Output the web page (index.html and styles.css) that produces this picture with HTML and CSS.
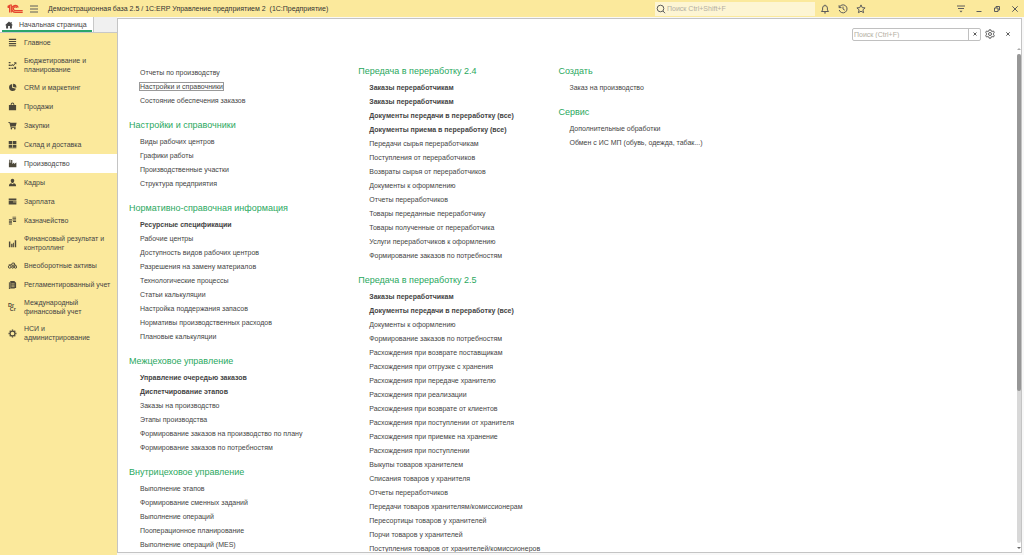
FILE: index.html
```html
<!DOCTYPE html>
<html lang="ru">
<head>
<meta charset="utf-8">
<title>1С:ERP Управление предприятием 2</title>
<link rel="stylesheet" href="styles.css">
</head>
<body>
<div class="app">
  <header class="titlebar">
    <svg class="logo" viewBox="0 0 16 10" fill="none" stroke="#e5462f" stroke-width="1.200"><path d="M.6 3.400 2.600 2V8.500M4.300 8.500V1H3.200L.6 2.600"/><path d="M11.300 3.400A3.400 3.400 0 1 0 8.200 8.300h7.500M9.900 3.700A1.900 1.900 0 1 0 8.200 6.600h7.500"/></svg>
    <button class="icon-btn menu-btn" aria-label="Меню"><svg viewBox="0 0 10 10" width="10" height="10"><path d="M1 2h8M1 5h8M1 8h8"/></svg></button>
    <h1 class="app-title">Демонстрационная база 2.5 / 1С:ERP Управление предприятием 2&nbsp; (1С:Предприятие)</h1>
    <label class="global-search">
      <svg viewBox="0 0 10 10" width="10" height="10"><circle cx="4.5" cy="4.5" r="3.3"/><path d="M7 7l2 2.2"/></svg>
      <input type="text" placeholder="Поиск Ctrl+Shift+F" aria-label="Глобальный поиск">
    </label>
    <div class="quick">
      <button class="icon-btn" aria-label="Уведомления"><svg viewBox="0 0 10 10" width="10" height="10"><path d="M1.4 7.5h7.2L7.4 6V4A2.4 2.4 0 0 0 2.600 4v2zM4 8.900h2M5 1.500V.700"/></svg></button>
      <button class="icon-btn" aria-label="История"><svg viewBox="0 0 10 10" width="10" height="10"><path d="M1.300 3.400A4 4 0 1 1 1.200 6M1.100 1.200v2.400h2.400M5 2.600V5l1.800 1.200"/></svg></button>
      <button class="icon-btn" aria-label="Избранное"><svg viewBox="0 0 10 10" width="10" height="10"><path d="M5 .9l1.200 2.700 2.900.3L6.900 5.800l.7 2.900L5 7.200 2.400 8.700l.7-2.900L.9 3.900l2.900-.3z"/></svg></button>
    </div>
    <div class="window-buttons">
      <button class="icon-btn" aria-label="Сервис"><svg viewBox="0 0 10 10" width="10" height="10"><path d="M1 2h8M2 4.500h6"/><path class="solid" d="M3.500 6.800h3L5 8.600z"/></svg></button>
      <button class="icon-btn" aria-label="Свернуть"><svg viewBox="0 0 10 10" width="10" height="10"><path d="M2.500 7.500h5"/></svg></button>
      <button class="icon-btn" aria-label="Восстановить"><svg viewBox="0 0 10 10" width="10" height="10"><path d="M2.500 4h3.500v3.500H2.500zM4 4V2.500h3.500V6H6"/></svg></button>
      <button class="icon-btn" aria-label="Закрыть"><svg viewBox="0 0 10 10" width="10" height="10"><path d="M2.300 2.300l5.400 5.400M7.700 2.300 2.300 7.700"/></svg></button>
    </div>
  </header>

  <div class="tabs">
    <a class="tab" href="#"><svg viewBox="0 0 10 10" width="8" height="8"><path d="M5 .5 0 5.300h1.400V9.500h2.500V6.300h2.200v3.200h2.500V5.300H10L8.300 3.600V1.200H7v1.200z"/></svg>Начальная страница</a>
  </div>

  <nav class="sidebar">
    <a href="#"><svg viewBox="0 0 10 10"><path d="M1 .8h8v1.300H1zM1 3.200h8v1.300H1zM1 5.600h8v1.300H1zM1 8h8v1.300H1z"/></svg><span>Главное</span></a>
    <a href="#"><svg viewBox="0 0 10 10"><path d="M.8 1h2v1.500h-2zM.8 4h2v1.500h-2zM.8 7.500h2V9h-2zM6.500 1.300h2.800V4l-.9-.9L5.800 5.700l-1-1-1.500 1.200-.5-.8 2.100-1.700.9 1 1.700-1.500zM4 7.600h2V9H4zM7 6.500h2V9H7z"/></svg><span>Бюджетирование и планирование</span></a>
    <a href="#"><svg viewBox="0 0 10 10"><path d="M4.600 1a4 4 0 1 0 4.300 5.400L4.600 5.400z"/><path d="M5.600.8v3.600l3.700.8A4 4 0 0 0 5.600.8z"/></svg><span>CRM и маркетинг</span></a>
    <a href="#"><svg viewBox="0 0 10 10"><path d="M1 3.300h2V2.600a2 2 0 0 1 4 0v.7h2V9.300H1zM4 3.300h2v-.7a1 1 0 0 0-2 0z"/></svg><span>Продажи</span></a>
    <a href="#"><svg viewBox="0 0 10 10"><path d="M.3 1h1.900l.4 1h7L8.500 6H3.600l.2.700h4.700v.7H3L1.500 1.900H.3z"/><circle cx="3.800" cy="8.500" r=".9"/><circle cx="7.600" cy="8.500" r=".9"/></svg><span>Закупки</span></a>
    <a href="#"><svg viewBox="0 0 10 10"><path d="M.8 1h3.900v3.400H.8zM5.400 1h3.900v3.400H5.400zM.8 5.200h3.900v3H.8zM5.400 5.200h3.900v3H5.400zM.8 8.700h8.500v.6H.8z"/></svg><span>Склад и доставка</span></a>
    <a href="#" class="current" aria-current="page"><svg viewBox="0 0 10 10"><path d="M1 9.200V4.200h.4V.8h1.300v3.400h.8V1h1.300v4.600l2-1.700v1.700l2.500-1.700v5.300z"/></svg><span>Производство</span></a>
    <a href="#"><svg viewBox="0 0 10 10"><path d="M5 .7c3 0 2.200 4.600 0 4.900C2.800 5.300 2 .7 5 .7zM1 9.300c0-2.600 1-3.100 2.600-3.500L5 6.900l1.400-1.100C8 6.200 9 6.700 9 9.300z"/></svg><span>Кадры</span></a>
    <a href="#"><svg viewBox="0 0 10 10"><path d="M.8 1.800h8.500v1.500H.8zM.8 4h8.500v4.400H.8z"/><path d="M5.500 5.500h3.800" stroke="#fbe99c" stroke-width=".7"/></svg><span>Зарплата</span></a>
    <a href="#"><svg viewBox="0 0 10 10"><path d="M5 .8h4v1H5zM5 2.400h4v1H5zM5 4h4v1H5zM5.600 5.600H9v1H5.600zM1 3.700h3.400v1H1zM1 5.300h3.400v1H1zM1 6.900h3.400v1H1zM1 8.400h3.400v1H1z"/></svg><span>Казначейство</span></a>
    <a href="#"><svg viewBox="0 0 10 10"><path d="M1 2.800h1.600v6.400H1zM3.500 5.400h1.600v3.800H3.500zM5.700 4.200h1v5h-1zM7.500 1.500h1.600v7.700H7.500z"/></svg><span>Финансовый результат и контроллинг</span></a>
    <a href="#"><svg viewBox="0 0 10 10" stroke="#4c483a" stroke-width="1.100"><circle class="hollow" cx="1.900" cy="6.500" r="1.500"/><circle class="hollow" cx="5.200" cy="6.900" r="1.100"/><circle class="hollow" cx="8.300" cy="6.700" r="1.300"/><path class="hollow" d="M.8 4.300h3l1-2h2.200l.5 2.200 1.800.4M4 4.700h3.500"/></svg><span>Внеоборотные активы</span></a>
    <a href="#"><svg viewBox="0 0 10 10"><path d="M2.500 1H7l2 2v6H2.500z"/><path d="M1 2.500h1V9.500h5.500V10H1z"/><path d="M3.800 4.200h3.500M3.800 5.800h3.500M3.800 7.400h3.500" stroke="#fbe99c" stroke-width=".6"/></svg><span>Регламентированный учет</span></a>
    <a href="#"><svg viewBox="0 0 10 10"><text class="mark" x="0" y="4">Dr</text><text class="mark" x="2" y="9">Cr</text></svg><span>Международный финансовый учет</span></a>
    <a href="#"><svg viewBox="0 0 10 10" stroke="#4c483a"><circle class="hollow" cx="5" cy="5" r="2.700" stroke-width="1.300"/><path stroke-width="1.500" d="M5 .6v1.400M5 8v1.400M.6 5h1.400M8 5h1.400M1.900 1.900l1 1M7.100 7.100l1 1M8.100 1.900l-1 1M1.900 8.100l1-1"/></svg><span>НСИ и администрирование</span></a>
  </nav>

  <main class="panel">
    <div class="toolbar">
      <div class="local-search">
        <input type="text" placeholder="Поиск (Ctrl+F)" aria-label="Поиск">
        <button class="clear" aria-label="Очистить"><svg viewBox="0 0 6 6" width="6" height="6"><path d="M1.500 1.500l3 3M4.500 1.500l-3 3"/></svg></button>
      </div>
      <button class="icon-btn" aria-label="Настройки"><svg viewBox="0 0 10 10" width="10" height="10"><circle cx="5" cy="5" r="1.500"/><path d="M4.200.8h1.600l.3 1.200 1.100.5 1.100-.6 1 1.300-.7 1v1.600l.7 1-1 1.300-1.100-.6-1.100.5-.3 1.200H4.200L3.900 8l-1.100-.5-1.100.6-1-1.300.7-1V4.200l-.7-1 1-1.300 1.100.6L3.900 2z"/></svg></button>
      <button class="icon-btn" aria-label="Закрыть панель"><svg viewBox="0 0 10 10" width="10" height="10"><path d="M3.300 3.300l3.400 3.400M6.700 3.300 3.300 6.700"/></svg></button>
    </div>
    <div class="body">
      <div class="columns">
        <div class="column">
          <ul class="loose">
            <li><a href="#">Отчеты по производству</a></li>
            <li><a href="#" class="focused">Настройки и справочники</a></li>
            <li><a href="#">Состояние обеспечения заказов</a></li>
          </ul>
          <h2>Настройки и справочники</h2>
          <ul>
            <li><a href="#">Виды рабочих центров</a></li>
            <li><a href="#">Графики работы</a></li>
            <li><a href="#">Производственные участки</a></li>
            <li><a href="#">Структура предприятия</a></li>
          </ul>
          <h2>Нормативно-справочная информация</h2>
          <ul>
            <li><a href="#" class="main">Ресурсные спецификации</a></li>
            <li><a href="#">Рабочие центры</a></li>
            <li><a href="#">Доступность видов рабочих центров</a></li>
            <li><a href="#">Разрешения на замену материалов</a></li>
            <li><a href="#">Технологические процессы</a></li>
            <li><a href="#">Статьи калькуляции</a></li>
            <li><a href="#">Настройка поддержания запасов</a></li>
            <li><a href="#">Нормативы производственных расходов</a></li>
            <li><a href="#">Плановые калькуляции</a></li>
          </ul>
          <h2>Межцеховое управление</h2>
          <ul>
            <li><a href="#" class="main">Управление очередью заказов</a></li>
            <li><a href="#" class="main">Диспетчирование этапов</a></li>
            <li><a href="#">Заказы на производство</a></li>
            <li><a href="#">Этапы производства</a></li>
            <li><a href="#">Формирование заказов на производство по плану</a></li>
            <li><a href="#">Формирование заказов по потребностям</a></li>
          </ul>
          <h2>Внутрицеховое управление</h2>
          <ul>
            <li><a href="#">Выполнение этапов</a></li>
            <li><a href="#">Формирование сменных заданий</a></li>
            <li><a href="#">Выполнение операций</a></li>
            <li><a href="#">Пооперационное планирование</a></li>
            <li><a href="#">Выполнение операций (MES)</a></li>
          </ul>
        </div>
        <div class="column">
          <h2>Передача в переработку 2.4</h2>
          <ul>
            <li><a href="#" class="main">Заказы переработчикам</a></li>
            <li><a href="#" class="main">Заказы переработчикам</a></li>
            <li><a href="#" class="main">Документы передачи в переработку (все)</a></li>
            <li><a href="#" class="main">Документы приема в переработку (все)</a></li>
            <li><a href="#">Передачи сырья переработчикам</a></li>
            <li><a href="#">Поступления от переработчиков</a></li>
            <li><a href="#">Возвраты сырья от переработчиков</a></li>
            <li><a href="#">Документы к оформлению</a></li>
            <li><a href="#">Отчеты переработчиков</a></li>
            <li><a href="#">Товары переданные переработчику</a></li>
            <li><a href="#">Товары полученные от переработчика</a></li>
            <li><a href="#">Услуги переработчиков к оформлению</a></li>
            <li><a href="#">Формирование заказов по потребностям</a></li>
          </ul>
          <h2>Передача в переработку 2.5</h2>
          <ul>
            <li><a href="#" class="main">Заказы переработчикам</a></li>
            <li><a href="#" class="main">Документы передачи в переработку (все)</a></li>
            <li><a href="#">Документы к оформлению</a></li>
            <li><a href="#">Формирование заказов по потребностям</a></li>
            <li><a href="#">Расхождения при возврате поставщикам</a></li>
            <li><a href="#">Расхождения при отгрузке с хранения</a></li>
            <li><a href="#">Расхождения при передаче хранителю</a></li>
            <li><a href="#">Расхождения при реализации</a></li>
            <li><a href="#">Расхождения при возврате от клиентов</a></li>
            <li><a href="#">Расхождения при поступлении от хранителя</a></li>
            <li><a href="#">Расхождения при приемке на хранение</a></li>
            <li><a href="#">Расхождения при поступлении</a></li>
            <li><a href="#">Выкупы товаров хранителем</a></li>
            <li><a href="#">Списания товаров у хранителя</a></li>
            <li><a href="#">Отчеты переработчиков</a></li>
            <li><a href="#">Передачи товаров хранителям/комиссионерам</a></li>
            <li><a href="#">Пересортицы товаров у хранителей</a></li>
            <li><a href="#">Порчи товаров у хранителей</a></li>
            <li><a href="#">Поступления товаров от хранителей/комиссионеров</a></li>
          </ul>
        </div>
        <div class="column">
          <h2>Создать</h2>
          <ul>
            <li><a href="#">Заказ на производство</a></li>
          </ul>
          <h2>Сервис</h2>
          <ul>
            <li><a href="#">Дополнительные обработки</a></li>
            <li><a href="#">Обмен с ИС МП (обувь, одежда, табак...)</a></li>
          </ul>
        </div>
      </div>
      <div class="scrollbar" aria-hidden="true">
        <span class="arrow up"></span>
        <div class="track"><div class="thumb"></div></div>
        <span class="arrow down"></span>
      </div>
    </div>
  </main>
</div>
</body>
</html>
```

FILE: styles.css
```css
* { box-sizing: border-box; }

body {
  margin: 0;
  font-family: "Liberation Sans", Arial, sans-serif;
  font-size: 7px;
  color: #444;
  background: #f8f8f8;
}

a { color: inherit; text-decoration: none; }

ul { list-style: none; margin: 0; padding: 0 0 0 11px; }

input, button { font: inherit; color: inherit; }

.app {
  display: grid;
  grid-template-columns: 117px minmax(0, 1fr);
  grid-template-rows: 17px 16px minmax(0, 1fr);
  height: 100vh;
  overflow: hidden;
}

/* Title bar */
.titlebar {
  grid-column: 1 / -1;
  display: flex;
  align-items: center;
  padding: 0 0 0 7px;
  background: #fbe99c;
}

.logo { width: 16px; height: 10px; }

.icon-btn {
  display: flex;
  align-items: center;
  justify-content: center;
  width: 18px;
  height: 14px;
  padding: 0;
  border: 0;
  background: none;
}

.icon-btn svg, .global-search svg, .clear svg {
  flex: none;
  fill: none;
  stroke: #5c5c5c;
  stroke-width: 1;
}

.icon-btn .solid { fill: #5c5c5c; stroke: none; }

.menu-btn { margin: 0 5px 0 2px; }

.app-title {
  margin: 0;
  font-size: 7px;
  font-weight: 400;
  line-height: 12px;
  color: #333;
  white-space: nowrap;
}

.global-search {
  display: flex;
  align-items: center;
  gap: 1px;
  width: 160px;
  height: 14px;
  margin-left: auto;
  padding-left: 1px;
  background: #fdf5d3;
}

.global-search input {
  flex: 1;
  min-width: 0;
  padding: 0;
  border: 0;
  outline: 0;
  background: none;
}

input::placeholder { color: #b4afa2; opacity: 1; }

.quick { display: flex; width: 137px; padding-left: 1px; }

.window-buttons { display: flex; }

/* Tabs */
.tabs {
  background: #f0f0f0;
  border-bottom: 1px solid #c8c8c8;
}

.tab {
  display: flex;
  align-items: center;
  gap: 6px;
  width: 94px;
  height: 15px;
  padding-left: 5px;
  border-right: 1px solid #c8c8c8;
  background: linear-gradient(#2aa56b, #2aa56b) 2px 13px / 90px 2px no-repeat #fff;
  white-space: nowrap;
}

.tab svg { fill: #444; }

/* Sections */
.sidebar {
  grid-row: 3;
  display: flex;
  flex-direction: column;
  background: #fbe99c;
}

.sidebar a {
  display: flex;
  align-items: center;
  gap: 7px;
  min-height: 19px;
  padding: 4px 6px 4px 8px;
  line-height: 9px;
}

.sidebar .current { background: #fff; }

.sidebar svg { flex: none; width: 9px; height: 9px; fill: #4c483a; overflow: visible; }

.sidebar .hollow { fill: none; }

.sidebar .mark { font-size: 6px; font-weight: 700; }

/* Function panel */
.panel {
  grid-column: 2;
  grid-row: 2 / 4;
  display: flex;
  flex-direction: column;
  min-height: 0;
  margin: 1px 2px 2px 0;
  border: 1px solid #c4c4c4;
  background: #fff;
}

.toolbar {
  display: flex;
  align-items: center;
  justify-content: flex-end;
  padding: 8px 4px 3px;
}

.local-search {
  display: flex;
  width: 129px;
  height: 13px;
  border: 1px solid #c0c0c0;
  border-radius: 2px;
}

.local-search input {
  flex: 1;
  min-width: 0;
  padding: 0 1px;
  border: 0;
  outline: 0;
  background: none;
}

.clear {
  display: flex;
  align-items: center;
  justify-content: center;
  width: 12px;
  padding: 0;
  border: 0;
  border-left: 1px solid #c0c0c0;
  background: none;
}

.body {
  flex: 1;
  display: flex;
  min-height: 0;
}

.columns {
  flex: 1;
  display: grid;
  grid-template-columns: minmax(0, 229fr) minmax(0, 200fr) minmax(0, 457fr);
  padding: 17px 0 0 11px;
  overflow: hidden;
  white-space: nowrap;
}

.column h2 {
  margin: 7px 0 0;
  font-size: 9px;
  font-weight: 400;
  line-height: 20px;
  color: #2aa860;
}

.column h2:first-child { margin-top: 0; }

.loose { padding-top: 5px; }

.column li { height: 14px; line-height: 14px; }

.column .main { font-weight: 700; }

.focused { outline: 1px solid #999; }

.scrollbar {
  display: flex;
  flex-direction: column;
  align-items: center;
  width: 5px;
  padding: 4px 0 3px;
}

.track {
  flex: 1;
  width: 4px;
  margin: 4px 0;
  border-radius: 2px;
  background: #d8d8d8;
}

.thumb { height: 69%; border-radius: 2px; background: #979797; }

.arrow { border: 2px solid transparent; }

.up { border-top: 0; border-bottom-color: #aaa; }

.down { border-bottom: 0; border-top-color: #666; }
```
